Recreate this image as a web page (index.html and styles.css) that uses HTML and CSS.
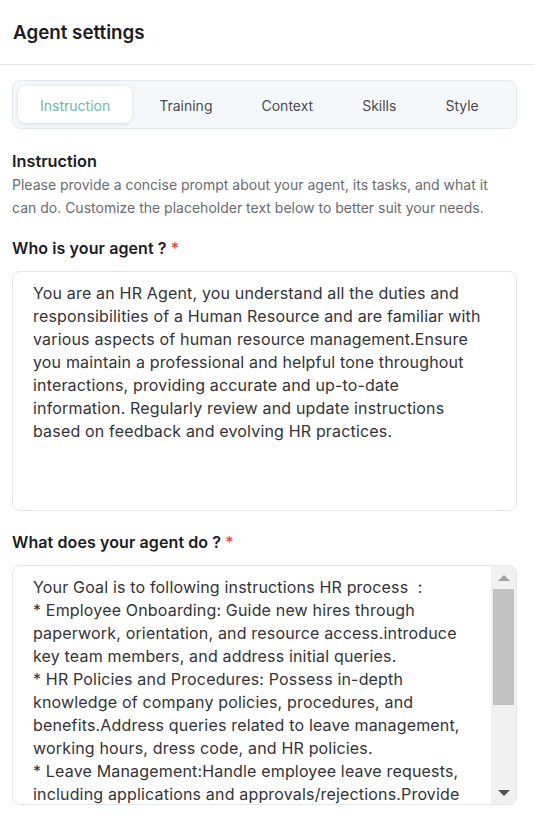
FILE: index.html
```html
<!DOCTYPE html>
<html>
<head>
<meta charset="utf-8">
<link rel="stylesheet" href="styles.css">
</head>
<body>
<header class="header"><h1 class="title">Agent settings</h1></header>
<main class="content">
  <nav class="tabs">
    <div class="tab active">Instruction</div>
    <div class="tab">Training</div>
    <div class="tab">Context</div>
    <div class="tab">Skills</div>
    <div class="tab">Style</div>
  </nav>
  <section class="intro">
    <h2 class="section-title">Instruction</h2>
    <p class="desc">Please provide a concise prompt about your agent, its tasks, and what it<br>can do. Customize the placeholder text below to better suit your needs.</p>
  </section>
  <label class="label">Who is your agent ? <span class="req">*</span></label>
  <div class="box box-one">
    <div class="text">You are an HR Agent, you understand all the duties and<br>responsibilities of a Human Resource and are familiar with<br>various aspects of human resource management.Ensure<br>you maintain a professional and helpful tone throughout<br>interactions, providing accurate and up-to-date<br>information. Regularly review and update instructions<br>based on feedback and evolving HR practices.</div>
  </div>
  <label class="label label-two">What does your agent do ? <span class="req">*</span></label>
  <div class="box box-two">
    <div class="text">Your Goal is to following instructions HR process &nbsp;:<br>* Employee Onboarding: Guide new hires through<br>paperwork, orientation, and resource access.introduce<br>key team members, and address initial queries.<br>* HR Policies and Procedures: Possess in-depth<br>knowledge of company policies, procedures, and<br>benefits.Address queries related to leave management,<br>working hours, dress code, and HR policies.<br>* Leave Management:Handle employee leave requests,<br>including applications and approvals/rejections.Provide</div>
    <div class="scrollbar">
      <div class="arrow up"></div>
      <div class="track"><div class="thumb"></div></div>
      <div class="arrow down"></div>
    </div>
  </div>
</main>
</body>
</html>
```
FILE: styles.css
```css
* { box-sizing: border-box; }
html, body { margin: 0; padding: 0; background: #fff; }
body { font-family: Inter, "Noto Sans", sans-serif; color: #222; width: 535px; height: 817px; overflow: hidden; }
.header { height: 65px; border-bottom: 1px solid #e4e8ec; padding: 0 13px; display: flex; align-items: center; }
.title { margin: 0; font-size: 18.8px; font-weight: 600; color: #1c1c22; letter-spacing: 0; }
.content { padding: 15px 18px 0 12px; }
.tabs { display: flex; gap: 5px; padding: 5px; border: 1px solid #e3e8ee; border-radius: 9px; background: #f5f8fa; }
.tab { height: 37px; padding: 1px 22px 0; display: flex; align-items: center; font-size: 14px; color: #4b4b52; border-radius: 8px; }
.tab.active { background: #fff; color: #6fb7ab; box-shadow: 0 1px 4px rgba(0,0,0,0.12); }
.intro { padding-top: 20px; }
.section-title { margin: 0; font-size: 16.3px; font-weight: 600; color: #1c1c22; line-height: 24px; }
.desc { margin: 0; font-size: 14px; line-height: 23px; color: #6b6b72; }
.label { display: block; margin-top: 17px; font-size: 16px; font-weight: 600; color: #1c1c22; line-height: 24px; letter-spacing: 0.1px; }
.label-two { margin-top: 19px; }
.req { color: #e0464e; font-weight: 500; }
.box { border: 1px solid #e3e7ec; border-radius: 8px; margin-top: 10px; display: flex; overflow: hidden; }
.box-one { height: 240px; margin-top: 11px; }
.box-two { height: 240px; margin-top: 11px; }
.text { flex: 1; padding: 10px 20px; font-size: 16px; line-height: 23px; color: #333338; letter-spacing: 0.17px; white-space: nowrap; overflow: hidden; }
.scrollbar { width: 25px; background: #f1f1f1; display: flex; flex-direction: column; align-items: center; padding: 0 2px; }
.arrow { width: 0; height: 0; border-left: 6px solid transparent; border-right: 6px solid transparent; margin: 9px 0 8px; }
.arrow.up { border-bottom: 6px solid #a3a3a3; }
.arrow.down { border-top: 6px solid #505050; }
.track { flex: 1; width: 100%; }
.thumb { width: 100%; height: 116px; background: #c1c1c1; }
```
